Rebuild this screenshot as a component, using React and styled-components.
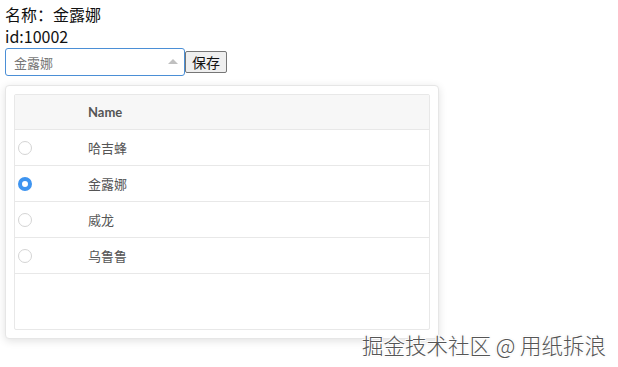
import React, { useState } from "react"
import styled, { createGlobalStyle } from "styled-components"

const GlobalStyle = createGlobalStyle`
  body {
    margin: 0;
    font-family: "Noto Sans CJK SC", "Noto Sans", sans-serif;
    background: #fff;
  }
`

const people = [
  { id: 10001, name: "哈吉蜂" },
  { id: 10002, name: "金露娜" },
  { id: 10003, name: "威龙" },
  { id: 10004, name: "乌鲁鲁" },
]

export default function App() {
  const [selected, setSelected] = useState(10002)
  const current = people.find((p) => p.id === selected)

  return (
    <Page>
      <GlobalStyle />
      <Line>名称：{current.name}</Line>
      <Line>id:{current.id}</Line>
      <Controls>
        <Select>
          <span>{current.name}</span>
          <Arrow />
        </Select>
        <SaveButton>保存</SaveButton>
      </Controls>
      <Dropdown>
        <Table>
          <HeadRow>
            <RadioCell />
            <NameCell bold>Name</NameCell>
          </HeadRow>
          {people.map((p) => (
            <Row key={p.id} onClick={() => setSelected(p.id)}>
              <RadioCell>
                <Radio checked={p.id === selected} />
              </RadioCell>
              <NameCell>{p.name}</NameCell>
            </Row>
          ))}
          <Filler />
        </Table>
      </Dropdown>
      <Watermark>掘金技术社区 @ 用纸拆浪</Watermark>
    </Page>
  )
}

const Page = styled.div`
  position: relative;
  width: 618px;
  height: 367px;
  padding: 3px 5px;
  box-sizing: border-box;
`

const Line = styled.div`
  font-size: 16px;
  line-height: 22px;
  color: #111;
`

const Controls = styled.div`
  display: flex;
  align-items: center;
  margin-top: 1px;
`

const Select = styled.div`
  width: 180px;
  height: 28px;
  box-sizing: border-box;
  border: 1px solid #4b8fd6;
  border-radius: 3px;
  display: flex;
  align-items: center;
  justify-content: space-between;
  padding: 0 6px 0 8px;
  font-size: 13px;
  color: #777;
`

const Arrow = styled.i`
  width: 0;
  height: 0;
  border-left: 5px solid transparent;
  border-right: 5px solid transparent;
  border-bottom: 5px solid #c0c0c0;
  margin-bottom: 2px;
`

const SaveButton = styled.button`
  height: 22px;
  padding: 0 6px;
  font-family: "Noto Sans CJK SC", sans-serif;
  font-size: 14px;
  line-height: 20px;
  color: #111;
  background: #efefef;
  border: 1px solid #767676;
  border-radius: 2px;
`

const Dropdown = styled.div`
  margin-top: 9px;
  width: 434px;
  box-sizing: border-box;
  padding: 8px;
  background: #fff;
  border: 1px solid #e6e6e6;
  border-radius: 4px;
  box-shadow: 0 2px 8px rgba(0, 0, 0, 0.12);
`

const Table = styled.div`
  border: 1px solid #e8e8e8;
  border-radius: 2px;
  display: flex;
  flex-direction: column;
`

const Row = styled.div`
  display: flex;
  align-items: center;
  height: 35px;
  border-bottom: 1px solid #e8e8e8;
  cursor: pointer;
`

const HeadRow = styled(Row)`
  background: #f7f7f7;
  height: 34px;
  cursor: default;
`

const RadioCell = styled.div`
  width: 73px;
  padding-left: 3px;
  box-sizing: border-box;
  display: flex;
  align-items: center;
`

const NameCell = styled.div`
  font-size: 13px;
  color: #555;
  font-weight: ${(p) => (p.bold ? 700 : 400)};
  font-family: ${(p) =>
    p.bold ? "Lato, 'Noto Sans', sans-serif" : "'Noto Sans CJK SC', sans-serif"};
`

const Radio = styled.span`
  width: 14px;
  height: 14px;
  box-sizing: border-box;
  border-radius: 50%;
  border: ${(p) => (p.checked ? "4px solid #3e94f0" : "1.5px solid #d4d4d4")};
  background: #fff;
`

const Filler = styled.div`
  height: 55px;
`

const Watermark = styled.div`
  position: absolute;
  right: 12px;
  bottom: 8px;
  font-size: 21.5px;
  font-weight: 300;
  line-height: 28px;
  color: #555;
  text-shadow: 1px 1px 0 #fff, -1px -1px 0 #fff, 1px -1px 0 #fff, -1px 1px 0 #fff,
    0 0 2px #999;
`
